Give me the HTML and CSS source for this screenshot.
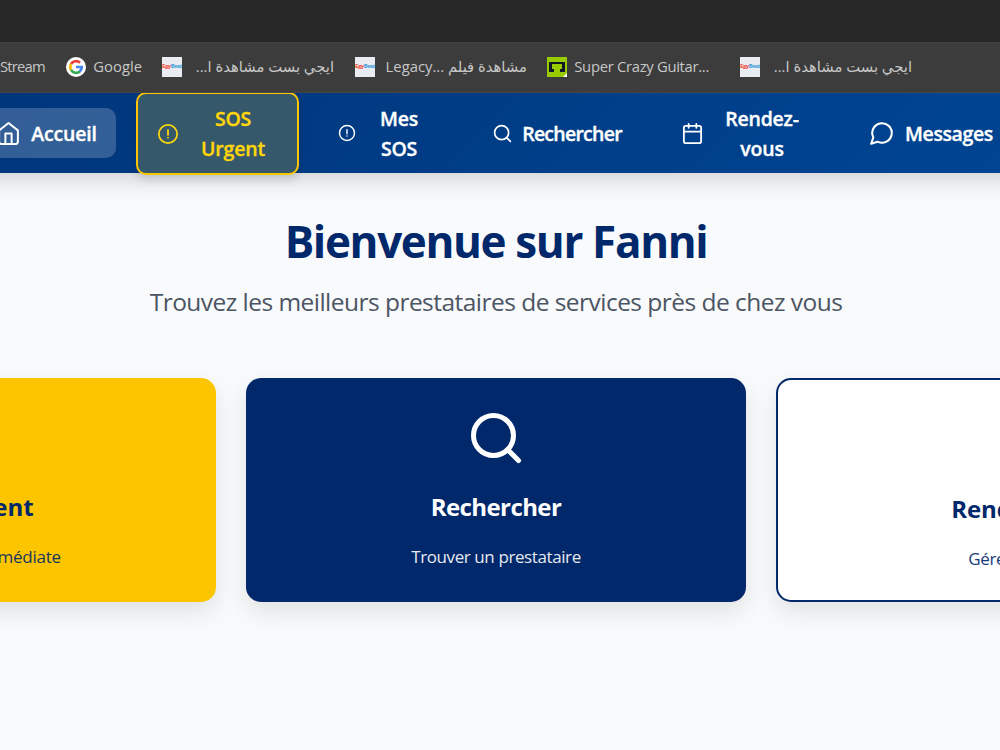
FILE: index.html
```html
<!DOCTYPE html>
<html lang="fr">
<head>
  <meta charset="UTF-8" />
  <meta name="viewport" content="width=device-width, initial-scale=1.0"/>
  <title>Fanni</title>
  <link rel="stylesheet" href="styles.css">
</head>
<body>
  <div class="topbar"></div>
  <div class="bookmarks">
    <div class="bookmark stream"><span>Stream</span></div>
    <div class="bookmark google">
      <svg viewBox="0 0 20 20"><circle cx="10" cy="10" r="10" fill="#fff"/><g fill="none" stroke-width="2.7"><path d="M5 7.1A5.8 5.8 0 0 1 14 5.8" stroke="#ea4335"/><path d="M5 12.9A5.8 5.8 0 0 1 5 7.1" stroke="#fbbc05"/><path d="M14 14.2A5.8 5.8 0 0 1 5 12.9" stroke="#34a853"/><path d="M10 10h5.8A5.8 5.8 0 0 1 13.7 14.4" stroke="#4285f4"/></g></svg>
      <span>Google</span>
    </div>
    <div class="bookmark egy">
      <b class="egy-icon"><i>Egy</i>Best</b>
      <span dir="rtl">ايجي بست مشاهدة ا...</span>
    </div>
    <div class="bookmark legacy">
      <b class="egy-icon"><i>Egy</i>Best</b>
      <span>Legacy... مشاهدة فيلم</span>
    </div>
    <div class="bookmark guitar">
      <svg viewBox="0 0 20 20"><path fill="#9c0" d="M0 0h20v20H0z"/><path fill="#111827" d="M2 5h16v10h-5v-3h2V7H5v5h2v3H2z"/><path fill="#fff" d="M20 16v4h-4z"/></svg>
      <span>Super Crazy Guitar...</span>
    </div>
    <div class="bookmark egy last">
      <b class="egy-icon"><i>Egy</i>Best</b>
      <span dir="rtl">ايجي بست مشاهدة ا...</span>
    </div>
  </div>

  <nav>
    <a class="nav-item home">
      <svg viewBox="0 0 24 24"><path d="m3 9 9-7 9 7v11a2 2 0 0 1-2 2H5a2 2 0 0 1-2-2z"/><path d="M9 22V12h6v10"/></svg>
      <span>Accueil</span>
    </a>
    <a class="nav-item urgent">
      <svg viewBox="0 0 24 24"><circle cx="12" cy="12" r="10"/><path d="M12 7.5V13M12 16h.01"/></svg>
      <span>SOS<br>Urgent</span>
    </a>
    <a class="nav-item mes-sos">
      <svg viewBox="0 0 24 24"><circle cx="12" cy="12" r="10"/><path d="M12 7.5V13M12 16h.01"/></svg>
      <span>Mes<br>SOS</span>
    </a>
    <a class="nav-item search">
      <svg viewBox="0 0 24 24"><circle cx="11" cy="11" r="8"/><path d="m21 21-4.35-4.35"/></svg>
      <span>Rechercher</span>
    </a>
    <a class="nav-item rdv">
      <svg viewBox="0 0 24 24"><rect x="3" y="4" width="18" height="18" rx="2"/><path d="M16 2v4M8 2v4M3 10h18"/></svg>
      <span>Rendez-<br>vous</span>
    </a>
    <a class="nav-item messages">
      <svg viewBox="0 0 24 24"><path d="M7.9 20A9 9 0 1 0 4 16.1L2 22Z"/></svg>
      <span>Messages</span>
    </a>
  </nav>

  <main>
    <h1>Bienvenue sur Fanni</h1>
    <p class="subtitle">Trouvez les meilleurs prestataires de services près de chez vous</p>

    <div class="cards">
      <div class="card card-sos">
        <svg viewBox="0 0 24 24"></svg>
        <h3>SOS Urgent</h3>
        <p>Besoin d'aide immédiate</p>
      </div>
      <div class="card card-search">
        <svg viewBox="0 0 24 24"><circle cx="11" cy="11" r="8"/><path d="m21 21-4.35-4.35"/></svg>
        <h3>Rechercher</h3>
        <p>Trouver un prestataire</p>
      </div>
      <div class="card card-rdv">
        <svg viewBox="0 0 24 24"></svg>
        <h3>Rendez-vous</h3>
        <p>Gérer mes RDV</p>
      </div>
    </div>
  </main>
</body>
</html>
```
FILE: styles.css
```css
:root {
  --navy: #00286a;
  --yellow: #fdc500;
}
* {
  box-sizing: border-box;
}
body {
  font-family: "Open Sans", "Noto Sans", "DejaVu Sans", sans-serif;
  background-color: #f9fafc;
  margin: 0;
  height: 750px;
  overflow: hidden;
}
svg {
  flex: none;
}
.topbar {
  height: 42px;
  background: #272727;
}
.bookmarks {
  position: relative;
  z-index: 2;
  height: 51px;
  padding-bottom: 1px;
  display: flex;
  align-items: center;
  gap: 20px;
  background: #3c3c3c;
  border-bottom: 1px solid #474747;
  border-top: 1px solid #414141;
  color: #c7c7c7;
  font-size: 14.8px;
  white-space: nowrap;
}
.bookmark {
  flex: none;
  display: flex;
  align-items: center;
  justify-content: space-between;
  height: 20px;
}
.bookmark svg {
  width: 20px;
  height: 20px;
}
.bookmark span {
  padding-bottom: 2px;
}
.stream { width: 46px; letter-spacing: -0.8px; }
.google { width: 76px; }
.egy { width: 172px; }
.legacy { width: 172px; margin-left: 1px; }
.guitar { width: 162px; letter-spacing: -0.3px; }
.last { margin-left: 11px; }
.egy-icon {
  width: 20px;
  height: 20px;
  background: #e9edf1;
  color: #3b9bd8;
  font-size: 6px;
  line-height: 18px;
  text-align: center;
  letter-spacing: -0.5px;
}
.egy-icon i {
  color: #f04a3a;
  font-style: normal;
}

nav {
  position: relative;
  height: 80px;
  margin: 0 -40px;
  padding-left: 40px;
  display: flex;
  align-items: center;
  gap: 20px;
  background: linear-gradient(135deg, #00357b, #004593);
  box-shadow: 0 5px 25px rgba(0,0,0,0.18);
}
.nav-item {
  flex: none;
  display: flex;
  align-items: center;
  padding: 0 20px;
  color: #fff;
  font-size: 19.5px;
  font-weight: 600;
  line-height: 30px;
  letter-spacing: -0.2px;
  -webkit-text-stroke: 0.35px currentColor;
}
.nav-item svg, .card svg {
  fill: none;
  stroke: currentColor;
  stroke-width: 2;
  stroke-linecap: round;
  stroke-linejoin: round;
}
.nav-item span {
  flex: 1;
  padding-top: 2px;
  text-align: center;
}
.home {
  width: 136px;
  height: 50px;
  margin-left: -20px;
  padding: 0 19px 0 16px;
  gap: 10px;
  border-radius: 10px;
  background: rgba(255,255,255,0.2);
}
.home svg { width: 25px; height: 25px; }
.urgent {
  width: 163px;
  height: 83px;
  margin-bottom: -1px;
  padding: 0 18px 0 19px;
  gap: 8px;
  color: #ffd60a;
  background: #35586a;
  border: 2px solid var(--yellow);
  border-radius: 10px;
  box-shadow: 0 5px 8px rgba(0,0,0,0.12);
}
.urgent svg { width: 22px; height: 22px; }
.urgent span { padding-top: 0; }
.mes-sos { width: 134px; padding-left: 19px; gap: 9px; }
.mes-sos svg { width: 18px; height: 18px; }
.search { width: 169px; padding-left: 19px; gap: 9px; letter-spacing: -0.75px; }
.search svg { width: 21px; height: 21px; }
.rdv { width: 169px; padding-left: 19px; gap: 9px; }
.rdv svg { width: 23px; height: 23px; }
.messages { width: 162px; padding-left: 18px; gap: 10px; letter-spacing: -0.4px; }
.messages svg { width: 26px; height: 26px; }
.messages span { text-align: left; }
.nav-item svg { stroke-width: 1.9; }

main {
  width: 992px;
  padding-top: 37px;
  display: flex;
  flex-direction: column;
  align-items: center;
}
h1 {
  margin: 0;
  color: var(--navy);
  font-size: 44px;
  font-weight: 700;
  line-height: 62px;
  letter-spacing: -1.35px;
}
.subtitle {
  margin: 10px 0 56px;
  color: #4b5563;
  font-size: 24.5px;
  line-height: 40px;
  letter-spacing: -0.53px;
  white-space: nowrap;
}
.cards {
  display: grid;
  grid-template-columns: repeat(3, 500px);
  gap: 30px;
}
.card {
  height: 224px;
  padding-top: 30px;
  display: flex;
  flex-direction: column;
  align-items: center;
  border-radius: 15px;
  box-shadow: 0 10px 25px rgba(0,0,0,0.1);
}
.card svg {
  width: 60px;
  height: 60px;
}
.card h3 {
  margin: 20px 0 0;
  font-size: 24px;
  font-weight: 700;
  line-height: 38px;
  letter-spacing: -0.6px;
}
.card p {
  margin: 16px 0 0;
  font-size: 17px;
  line-height: 30px;
  letter-spacing: -0.4px;
  opacity: 0.9;
}
.card-sos {
  color: var(--navy);
  background: var(--yellow);
}
.card-sos h3 {
  letter-spacing: 0.1px;
}
.card-sos p {
  letter-spacing: -0.25px;
}
.card-rdv h3 {
  letter-spacing: -0.1px;
}
.card-search {
  color: #fff;
  background: var(--navy);
}
.card-rdv {
  color: var(--navy);
  background: #fff;
  border: 2px solid var(--navy);
}
```
